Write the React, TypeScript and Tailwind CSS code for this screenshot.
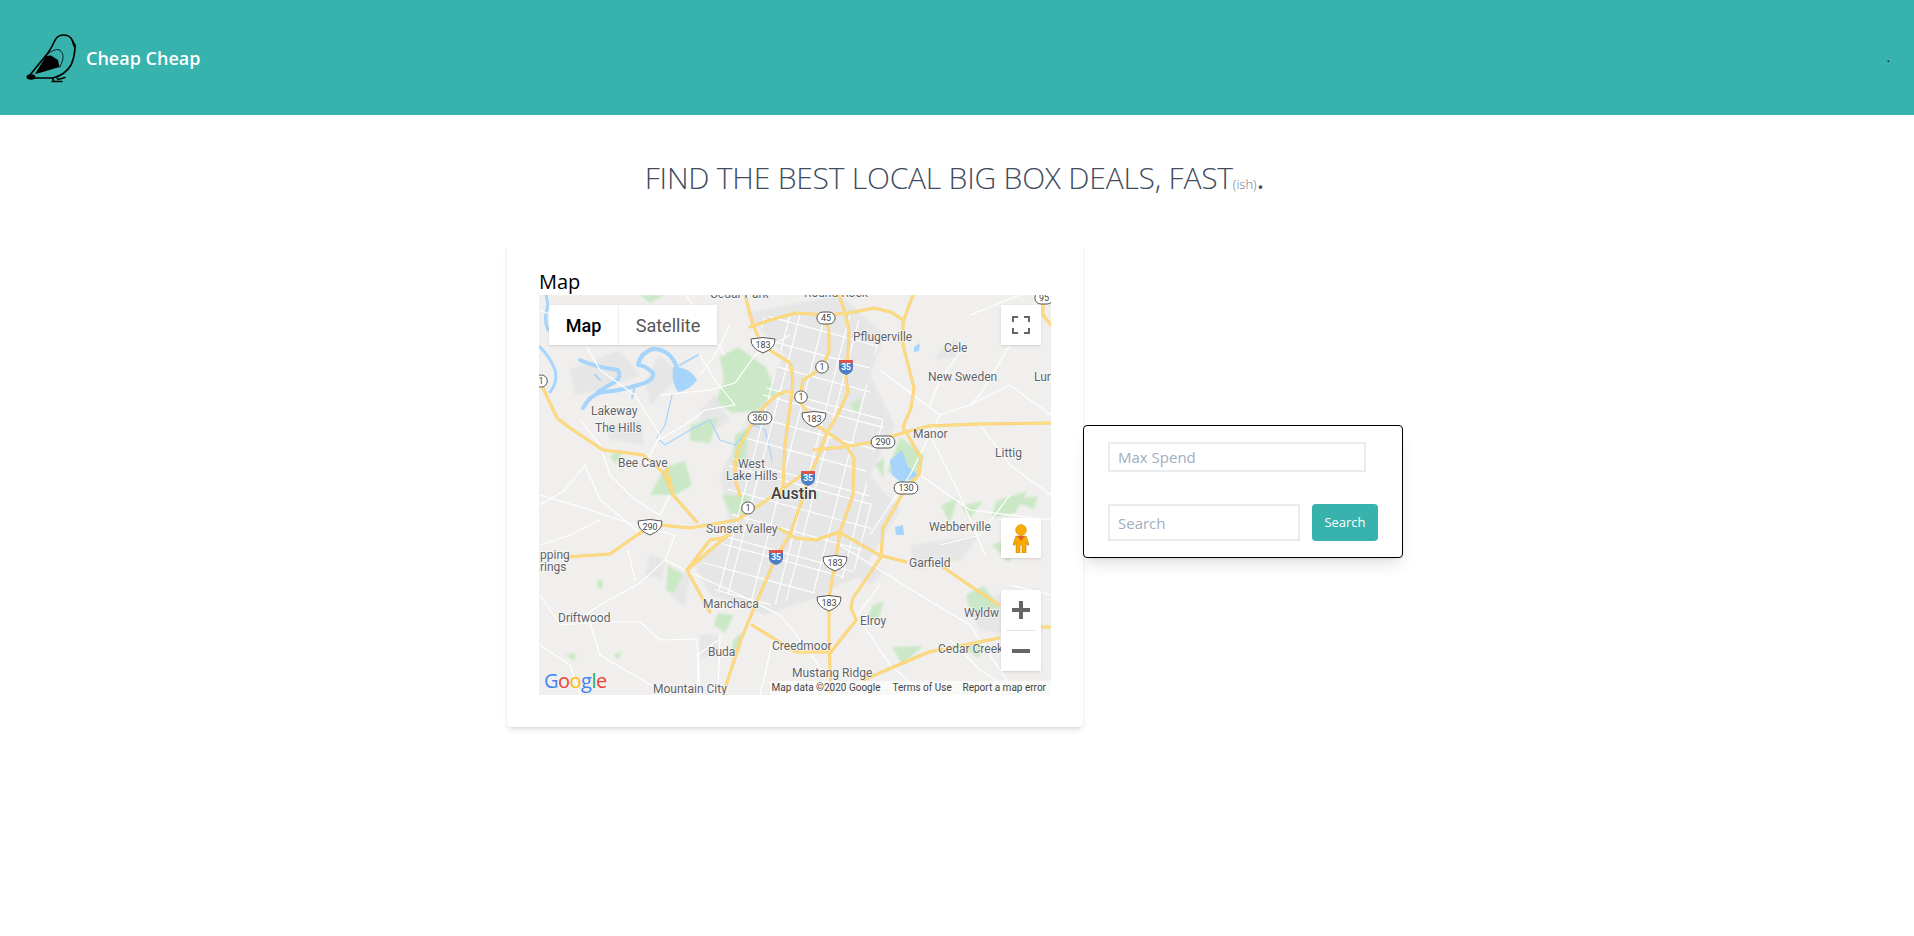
const YELLOW_ROADS = [
  'M205 0 L213 30 L222 50 L250 68 Q254 80 252 97 L244 97 Q230 102 216 122 L200 150 Q194 165 195 185 L200 200',
  'M210 32 Q225 26 256 18 L286 20 L309 18 L334 13 L351 17 L363 25',
  'M299 0 L306 20 L309 37 L308 60 L306 83 L308 97 L299 117 L286 140 L276 167 L268 183 L262 205 L250 240 L236 262 L214 313 L200 347 L183 400',
  'M261 97 L263 85 L273 79 L282 72 L289 57 L289 37 L286 23',
  'M252 97 L245 150 L243 190 L240 200',
  'M261 108 L276 130 L306 150 L314 163 L313 200 L300 237 L295 268 L289 303 L289 350 L291 400',
  'M274 155 L303 152 L333 147 L366 137 L389 131 L439 129 L511 128',
  'M373 0 L363 27 L363 50 L374 93 L371 113 L363 132 L381 163 L379 180 L366 193 L343 233 L341 262 L313 303 L311 313 L316 325 L291 357 L263 357',
  'M27 262 L70 259 L100 238 L120 230 L150 233 L197 225 L230 203 L262 180',
  'M238 233 L256 243 L276 245 L299 237 L339 260 L366 267',
  'M403 272 L429 290 L459 310',
  'M490 332 L512 332',
  'M323 385 L389 357 L459 343',
  'M187 242 L170 245 L147 275 L170 317',
  'M147 275 L190 238',
  'M127 173 L133 200 L157 227',
  'M3 93 L17 123 L30 133 L63 155 L80 157 L103 160 L123 177 L133 200',
  'M212 330 L233 343 L256 357 L263 357',
  'M503 0 L503 20 L511 30',
]

const WHITE_ROADS = [
  'M0 15 Q25 25 40 40 L60 75 L95 100 L120 140 L105 170',
  'M120 100 L170 95 L195 88 L215 60 L250 40',
  'M160 60 L175 85 L195 110 L165 115 L145 130 L118 145',
  'M190 30 L175 60 L160 80',
  'M40 125 L60 150 L70 180 L95 205 L120 220 L130 200',
  'M0 210 L25 195 L45 170 L60 205 L100 238',
  'M0 200 L50 215 L95 230 L135 240',
  'M135 240 L125 265 L100 288 L60 310 L45 320 L72 327 L100 327 L120 345 L157 344',
  'M88 255 L95 285',
  'M0 300 L20 330 L50 328 L60 360 L85 375 L120 395',
  'M157 344 L160 400',
  'M178 345 L158 360 L158 400',
  'M180 340 L178 400',
  'M125 265 L145 275 L200 300 L240 320',
  'M240 320 L260 345 L300 400',
  'M340 75 L400 120 L430 110 L470 90 L511 120',
  'M400 120 L370 180 L330 240',
  'M425 50 L400 85 L390 110',
  'M470 50 L440 100 L430 110',
  'M300 250 L380 300 L430 330 L470 390',
  'M340 290 L310 330',
  'M380 180 L430 215 L511 225',
  'M440 130 L470 170 L511 200',
  'M470 200 L440 240 L400 250',
  'M385 130 L420 200 L445 260',
  'M320 325 L350 370 L385 400',
  'M430 20 L480 0',
  'M146 0 L165 30 L185 60',
  'M233 343 L225 380 L220 400',
  'M0 250 L30 240 L60 225',
  'M0 350 L30 370 L40 400',
  'M410 345 L440 375 L480 400',
  'M470 290 L511 300',
]

const PARKS = [
  'M125 172 L145 166 L152 190 L136 200 L110 200 Z',
  'M180 62 L198 52 L226 72 L236 98 L215 116 L192 118 L176 106 L184 85 Z',
  'M150 130 L178 122 L170 148 L150 146 Z',
  'M195 140 L210 132 L204 172 L192 172 Z',
  'M100 0 L125 0 L110 8 Z',
  'M182 200 L210 200 L204 222 L190 218 Z',
  'M128 270 L143 280 L134 298 L126 296 Z',
  'M178 318 L194 320 L185 338 L174 330 Z',
  'M193 345 L203 337 L199 358 L192 358 Z',
  'M352 352 L383 351 L362 370 Z',
  'M332 311 L344 306 L339 323 L327 326 Z',
  'M360 142 L384 160 L375 188 L347 177 Z',
  'M421 211 L443 206 L430 223 Z',
  'M456 206 L488 196 L475 218 L452 223 Z',
  'M426 300 L444 291 L460 314 L432 318 Z',
  'M421 351 L443 346 L439 363 Z',
  'M452 250 L478 241 L469 268 Z',
  'M470 205 L498 201 L494 214 Z',
  'M401 211 L418 202 L410 228 Z',
  'M70 160 L84 156 L75 169 Z',
  'M58 285 L63 285 L62 295 L57 292 Z',
  'M25 360 L35 358 L35 366 Z',
  'M73 360 L83 356 L78 364 Z',
  'M65 12 L75 10 L72 16 Z',
  'M310 110 L321 102 L319 123 Z',
  'M335 170 L344 162 L344 183 Z',
]

const GRAY_AREAS = [
  'M205 18 L300 0 L345 40 L330 80 L355 130 L330 180 L360 215 L335 255 L320 282 L300 290 L285 300 L225 320 L170 300 L155 270 L190 235 L180 180 L210 120 L245 60 Z',
  'M30 75 L80 55 L100 80 L60 95 L35 100 Z',
  'M120 60 L140 80 L110 110 L105 85 Z',
  'M65 130 L100 125 L105 150 L70 145 Z',
  'M160 115 L175 100 L190 125 L160 145 Z',
  'M110 260 L125 265 L122 285 L105 280 Z',
  'M135 275 L150 280 L145 312 L130 300 Z',
  'M160 340 L178 340 L178 362 L160 362 Z',
  'M370 250 L440 240 L420 265 L375 275 Z',
  'M425 305 L465 300 L470 340 L440 335 Z',
  'M320 265 L345 275 L330 290 L312 280 Z',
  'M400 55 L415 45 L420 62 L395 65 Z',
]

const LABELS: [string, number, number][] = [
  ['Cedar Park', 170, 3],
  ['Round Rock', 264, 2],
  ['Pflugerville', 313, 46],
  ['Cele', 404, 57],
  ['New Sweden', 388, 86],
  ['Lun', 494, 86],
  ['Manor', 373, 143],
  ['Littig', 455, 162],
  ['Lakeway', 51, 120],
  ['The Hills', 55, 137],
  ['Bee Cave', 78, 172],
  ['West', 198, 173],
  ['Lake Hills', 186, 185],
  ['Sunset Valley', 166, 238],
  ['pping', 0, 264],
  ['rings', 0, 276],
  ['Driftwood', 18, 327],
  ['Manchaca', 163, 313],
  ['Buda', 168, 361],
  ['Mountain City', 113, 398],
  ['Creedmoor', 232, 355],
  ['Mustang Ridge', 252, 382],
  ['Elroy', 320, 330],
  ['Garfield', 369, 272],
  ['Webberville', 389, 236],
  ['Wyldw', 424, 322],
  ['Cedar Creek', 398, 358],
]

function Shield({ x, y, label, kind }: { x: number; y: number; label: string; kind: 'us' | 'pill' | 'i' }) {
  if (kind === 'i') {
    return (
      <g transform={`translate(${x} ${y})`}>
        <path d="M-7 -7 H7 V1 Q7 6 0 8 Q-7 6 -7 1 Z" fill="#4a7fc7" />
        <path d="M-7 -7 H7 V-4 H-7 Z" fill="#d9534f" />
        <text textAnchor="middle" y="3" fontSize="8.5" fontWeight="700" fill="#fff" fontFamily="Roboto, sans-serif">{label}</text>
      </g>
    )
  }
  const w = label.length * 5.6 + 7
  if (kind === 'us') {
    return (
      <g transform={`translate(${x} ${y})`}>
        <path d={`M${-w / 2} -6 Q0 -9 ${w / 2} -6 Q${w / 2 + 1} 3 0 8 Q${-w / 2 - 1} 3 ${-w / 2} -6 Z`} fill="#fff" stroke="#555" strokeWidth="1" />
        <text textAnchor="middle" y="3" fontSize="9" fill="#444" fontFamily="Roboto, sans-serif">{label}</text>
      </g>
    )
  }
  return (
    <g transform={`translate(${x} ${y})`}>
      <rect x={-w / 2} y="-6" width={w} height="12" rx="6" fill="#fff" stroke="#555" strokeWidth="1" />
      <text textAnchor="middle" y="3" fontSize="9" fill="#444" fontFamily="Roboto, sans-serif">{label}</text>
    </g>
  )
}

function MapArt() {
  // city streets, spacing varies a bit so it doesn't read as a perfect grid
  const gridA = Array.from({ length: 14 }, (_, i) => {
    const x = 140 + i * 20 + (i % 3) * 5
    return `M${x} 20 L${x - 80} 330`
  })
  const gridB = Array.from({ length: 17 }, (_, i) => {
    const y = i * 20 + (i % 4) * 4
    return `M150 ${y} L370 ${y + 60}`
  })
  return (
    <svg viewBox="-1 0 512 400" className="block h-full w-full">
      <defs>
        <clipPath id="city">
          <path d="M215 25 L295 5 L340 45 L325 85 L345 130 L325 180 L335 225 L315 275 L285 295 L225 312 L175 295 L160 270 L195 235 L185 180 L212 120 L245 60 Z" />
        </clipPath>
        <filter id="soft">
          <feGaussianBlur stdDeviation="1" />
        </filter>
      </defs>
      <rect x="-1" width="512" height="400" fill="#f0efed" />
      <g filter="url(#soft)">
        {GRAY_AREAS.map((d) => (
          <path key={d} d={d} fill="#e6e6e6" />
        ))}
        {PARKS.map((d) => (
          <path key={d} d={d} fill="#cbe8c6" />
        ))}
      </g>
      {/* lakes and the river */}
      <g fill="none" stroke="#a6d4fa" strokeLinecap="round" strokeLinejoin="round">
        <path d="M43 113 Q50 100 62 97 Q80 96 98 90 Q115 86 113 78 Q105 70 98 70 Q100 58 113 54 Q128 54 135 68 L140 80" strokeWidth="4" />
        <path d="M40 65 Q55 72 78 75 Q82 82 75 87 Q65 92 58 97" strokeWidth="4" />
        <path d="M6 0 L8 10 Q3 25 8 35 M0 52 Q10 62 15 75 Q18 88 10 97" strokeWidth="3" />
        <path d="M140 70 L158 60 M60 85 L55 80 M95 90 L92 103" strokeWidth="2" />
        <path d="M132 100 L125 130 L117 143 L125 150 L150 135 L170 125 L180 145 L195 150 L213 130 L225 135 L232 165" strokeWidth="1.2" />
      </g>
      <g fill="#a6d4fa">
        <path d="M133 72 Q150 72 157 85 Q150 95 138 97 Q131 88 133 72 Z" />
        <path d="M350 165 L362 155 L368 172 L378 180 L362 188 L352 180 Z" />
        <path d="M374 52 L380 48 L379 56 L374 57 Z" />
        <path d="M355 232 L363 230 L364 240 L356 240 Z" />
      </g>
      {/* streets */}
      <g fill="none" stroke="#fff" strokeWidth="1.1" clipPath="url(#city)">
        {gridA.map((d) => (
          <path key={d} d={d} />
        ))}
        {gridB.map((d) => (
          <path key={d} d={d} />
        ))}
      </g>
      <g fill="none" stroke="#fff" strokeWidth="1.2" strokeLinejoin="round">
        {WHITE_ROADS.map((d) => (
          <path key={d} d={d} />
        ))}
      </g>
      {/* highways */}
      <g fill="none" stroke="#f8cf6f" strokeWidth="3" strokeLinejoin="round" strokeLinecap="round">
        {YELLOW_ROADS.map((d) => (
          <path key={d} d={d} />
        ))}
      </g>
      <g fill="none" stroke="#fddc83" strokeWidth="1.8" strokeLinejoin="round" strokeLinecap="round">
        {YELLOW_ROADS.map((d) => (
          <path key={d} d={d} />
        ))}
      </g>
      <Shield x={223} y={50} label="183" kind="us" />
      <Shield x={220} y={123} label="360" kind="pill" />
      <Shield x={1} y={86} label="1" kind="pill" />
      <Shield x={286} y={23} label="45" kind="pill" />
      <Shield x={282} y={72} label="1" kind="pill" />
      <Shield x={306} y={72} label="35" kind="i" />
      <Shield x={261} y={102} label="1" kind="pill" />
      <Shield x={274} y={124} label="183" kind="us" />
      <Shield x={343} y={147} label="290" kind="pill" />
      <Shield x={366} y={193} label="130" kind="pill" />
      <Shield x={268} y={183} label="35" kind="i" />
      <Shield x={504} y={3} label="95" kind="pill" />
      <Shield x={208} y={213} label="1" kind="pill" />
      <Shield x={110} y={232} label="290" kind="us" />
      <Shield x={236} y={262} label="35" kind="i" />
      <Shield x={295} y={268} label="183" kind="us" />
      <Shield x={289} y={308} label="183" kind="us" />
      <g fontFamily="Roboto, sans-serif" fontSize="12" fill="#5f6368" stroke="#fff" strokeOpacity="0.7" strokeWidth="1.5" paintOrder="stroke" strokeLinejoin="round">
        {LABELS.map(([t, x, y]) => (
          <text key={t} x={x} y={y}>{t}</text>
        ))}
        <text x="231" y="204" fontSize="16" fontWeight="500" fill="#3c4043">Austin</text>
      </g>
    </svg>
  )
}

function Bird() {
  return (
    <svg viewBox="0 0 60 60" className="h-[60px] w-[60px] shrink-0">
      <g fill="none" stroke="#000" strokeWidth="1.7" strokeLinecap="round" strokeLinejoin="round">
        <path d="M9 47 L22 31 Q30 22 33 14 Q36 7 42 7 Q49 7 51 12 L54 18 Q54 28 50 37 Q44 47 32 50 L14 50" />
        <path d="M26 27 Q33 20 39 22 Q44 27 41 34 L39 39" strokeWidth="0.8" />
        <path d="M31 50 L33 53 M31 53.5 L41 53.5 M36 50 L37 51.5 L44 49.5" strokeWidth="1.4" />
      </g>
      <path d="M14 46 L25 28 L30 27.5 L37 32 L38.5 39 L20 44.5 Z" fill="#000" />
      <ellipse cx="10" cy="49" rx="4.5" ry="2.8" fill="#000" />
      <path d="M51 14 L55 16.5 L52.5 19 Z" fill="#000" />
    </svg>
  )
}

function Pegman() {
  return (
    <svg viewBox="0 0 16 29" className="h-[29px] w-[16px]">
      <circle cx="8" cy="6" r="5.4" fill="#f9ab00" stroke="#c98a00" strokeWidth="0.5" />
      <path d="M3 12 H13 L16 20 V21 H14 L13 18 V29 H9 V21 H7 V29 H3 V18 L2 21 H0 V20 Z" fill="#f9ab00" stroke="#b97a00" strokeWidth="0.5" />
      <path d="M4 12 L8 17 L12 12 Z" fill="#e0622a" />
    </svg>
  )
}

export default function App() {
  return (
    <div className="min-h-[936px] bg-white font-['Open_Sans',sans-serif]">
      <header className="flex h-[115px] items-center justify-between bg-[#38b2ac] pl-[21px] pr-[24px]">
        <div className="flex items-center gap-[5px]">
          <Bird />
          <span className="mt-[2px] text-[18px] font-semibold text-white">Cheap Cheap</span>
        </div>
        <span className="text-[12px] leading-none text-black">.</span>
      </header>

      <h1 className="mt-[43px] pr-[5px] text-center text-[30px] font-light leading-[40px] tracking-[-0.22px] text-[#414c5e]">
        FIND THE BEST LOCAL BIG BOX DEALS, FAST<span className="text-[13px] tracking-normal text-[#6b7280]">(ish)</span><span className="font-normal">.</span>
      </h1>

      <div className="ml-[507px] mt-[39px] flex w-[896px]">
        <section className="w-[576px] rounded bg-white p-8 shadow-md">
          <h2 className="mb-[6px] text-[20px] leading-[14px] text-black">Map</h2>
          <div className="relative h-[400px] w-[512px] overflow-hidden font-['Roboto',sans-serif]">
            <MapArt />

            <div className="absolute left-[10px] top-[10px] flex h-[40px] bg-white text-[18px] shadow-sm">
              <div className="flex w-[70px] items-center justify-center border-r border-[#eee] font-medium text-black">Map</div>
              <div className="flex w-[98px] items-center justify-center text-[#565656]">Satellite</div>
            </div>

            <div className="absolute left-[462px] top-[10px] flex h-[40px] w-[40px] items-center justify-center bg-white shadow-sm">
              <svg viewBox="0 0 18 18" className="h-[18px] w-[18px]" fill="#666">
                <path d="M0 0 H6 V2 H2 V6 H0 Z M12 0 H18 V6 H16 V2 H12 Z M0 12 H2 V16 H6 V18 H0 Z M16 12 H18 V18 H12 V16 H16 Z" />
              </svg>
            </div>

            <div className="absolute left-[462px] top-[223px] flex h-[40px] w-[40px] items-center justify-center bg-white shadow-sm">
              <Pegman />
            </div>

            <div className="absolute left-[462px] top-[295px] flex h-[81px] w-[40px] flex-col items-center bg-white shadow-sm">
              <div className="flex h-[40px] items-center justify-center">
                <svg viewBox="0 0 18 18" className="h-[18px] w-[18px]" fill="#666">
                  <path d="M7 0 H11 V7 H18 V11 H11 V18 H7 V11 H0 V7 H7 Z" />
                </svg>
              </div>
              <div className="h-px w-[30px] bg-[#e6e6e6]" />
              <div className="flex h-[40px] items-center justify-center">
                <svg viewBox="0 0 18 18" className="h-[18px] w-[18px]" fill="#666">
                  <path d="M0 7 H18 V11 H0 Z" />
                </svg>
              </div>
            </div>

            <div className="absolute bottom-[2px] left-[5px] font-['Open_Sans',sans-serif] text-[20px] font-medium leading-[24px] tracking-[-0.5px]">
              <span className="text-[#4285f4]">G</span>
              <span className="text-[#ea4335]">o</span>
              <span className="text-[#fbbc05]">o</span>
              <span className="text-[#4285f4]">g</span>
              <span className="text-[#34a853]">l</span>
              <span className="text-[#ea4335]">e</span>
            </div>

            <div className="absolute bottom-0 right-0 flex h-[14px] items-center bg-white/60 pl-[2px] pr-[5px] text-[10px] leading-none text-[#444]">
              <span className="w-[121px]">Map data ©2020 Google</span>
              <span className="w-[70px]">Terms of Use</span>
              <span>Report a map error</span>
            </div>
          </div>
        </section>

        <aside className="mt-[182px] flex h-[133px] w-[320px] flex-col rounded border border-black bg-white px-6 pt-4 shadow-lg">
          <input
            placeholder="Max Spend"
            className="h-[30px] w-[258px] border-2 border-[#e8ebef] px-2 text-[15px] outline-none placeholder:text-[#a0aec0]"
          />
          <div className="mt-8 flex gap-3">
            <input
              placeholder="Search"
              className="h-[37px] w-[192px] border-2 border-[#e8ebef] px-2 text-[15px] outline-none placeholder:text-[#a0aec0]"
            />
            <button className="h-[37px] w-[66px] rounded bg-[#38b2ac] text-[13px] text-white">Search</button>
          </div>
        </aside>
      </div>
    </div>
  )
}
